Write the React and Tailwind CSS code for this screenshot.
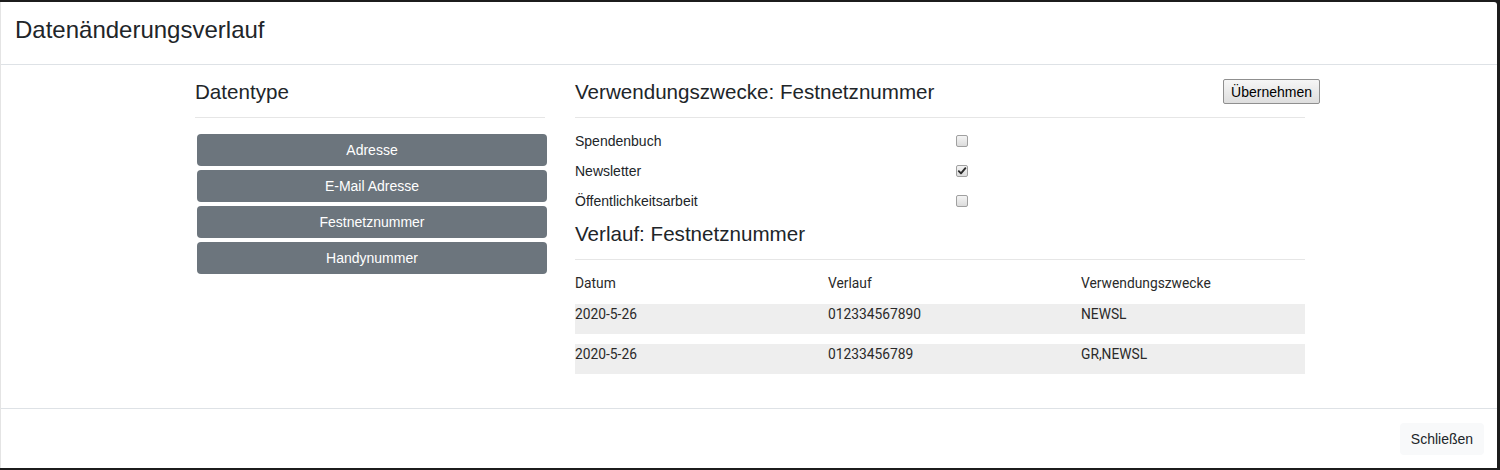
import React from 'react';

const types = ['Adresse', 'E-Mail Adresse', 'Festnetznummer', 'Handynummer'];

const purposes = [
    { label: 'Spendenbuch', checked: false },
    { label: 'Newsletter', checked: true },
    { label: 'Öffentlichkeitsarbeit', checked: false },
];

const history = [
    { date: '2020-5-26', value: '012334567890', purpose: 'NEWSL' },
    { date: '2020-5-26', value: '01233456789', purpose: 'GR,NEWSL' },
];

const Checkbox = ({ checked }) => (
    <span className="w-[12px] h-[12px] rounded-[2px] border border-[#a0a0a0] bg-gradient-to-b from-[#f4f4f4] to-[#dcdcdc] flex items-center justify-center">
        {checked && (
            <svg width="10" height="10" viewBox="0 0 10 10">
                <path d="M1.8 5.2 L4 7.4 L8.4 2.2" fill="none" stroke="#2b2b2b" strokeWidth="1.9" strokeLinecap="round" strokeLinejoin="round" />
            </svg>
        )}
    </span>
);

const App = () => {
    return (
        <div className="h-[470px] w-[1500px] bg-[#1c1c1c] pt-[2px] overflow-hidden font-['Liberation_Sans',Arial,sans-serif] text-[#212529]">
            <div className="w-[1497px] h-[466px] bg-white border-l border-[#e4e4e4] rounded-tr-[3px] flex flex-col">
                {/* Header */}
                <div className="h-[63px] border-b border-[#dee2e6] px-[14px] flex items-center">
                    <h5 className="text-[24px] leading-[28px] -mt-[6px]">Datenänderungsverlauf</h5>
                </div>

                {/* Body */}
                <div className="flex-1 pt-[15px]">
                    <div className="w-[1110px] ml-[194px] flex gap-[30px]">
                        <div className="w-[350px] shrink-0">
                            <h4 className="text-[20.6px] leading-[24px]">Datentype</h4>
                            <hr className="mt-[13px] border-t border-[#e6e6e6]" />
                            <div className="mt-[16px] ml-[2px] flex flex-col gap-[4px]">
                                {types.map((t) => (
                                    <button
                                        key={t}
                                        className="h-[32px] w-[350px] rounded-[4px] bg-[#6c757d] text-white text-[14px] leading-[20px] pb-[1px]"
                                    >
                                        {t}
                                    </button>
                                ))}
                            </div>
                        </div>

                        <div className="w-[730px] shrink-0">
                            <div className="flex items-start justify-between">
                                <h4 className="text-[20.6px] leading-[24px]">Verwendungszwecke: Festnetznummer</h4>
                                <button className="h-[25px] px-[7px] -mr-[15px] -mt-[1px] text-[14px] leading-[20px] text-black rounded-[2px] border border-[#8f8f8f] bg-gradient-to-b from-[#f6f6f6] to-[#dedede]">
                                    Übernehmen
                                </button>
                            </div>
                            <hr className="mt-[13px] border-t border-[#e6e6e6]" />
                            <div className="mt-[13px] flex flex-col gap-[10px]">
                                {purposes.map((p) => (
                                    <div key={p.label} className="flex items-center h-[20px] text-[14px]">
                                        <span className="w-[381px]">{p.label}</span>
                                        <Checkbox checked={p.checked} />
                                    </div>
                                ))}
                            </div>
                            <h4 className="mt-[11px] text-[20.6px] leading-[24px]">Verlauf: Festnetznummer</h4>
                            <hr className="mt-[13px] border-t border-[#e6e6e6]" />
                            <div className="mt-[13px] font-['Roboto',Arial,sans-serif] text-[13.8px] leading-[20px] text-[#2a2a2a]">
                                <div className="grid grid-cols-[253px_253px_1fr] h-[20px]">
                                    <span>Datum</span>
                                    <span>Verlauf</span>
                                    <span>Verwendungszwecke</span>
                                </div>
                                <div className="mt-[11px] flex flex-col gap-[10px]">
                                    {history.map((h, i) => (
                                        <div key={i} className="grid grid-cols-[253px_253px_1fr] h-[30px] bg-[#eeeeee]">
                                            <span>{h.date}</span>
                                            <span>{h.value}</span>
                                            <span>{h.purpose}</span>
                                        </div>
                                    ))}
                                </div>
                            </div>
                        </div>
                    </div>
                </div>

                {/* Footer */}
                <div className="h-[60px] border-t border-[#dee2e6] flex items-start justify-end pt-[14px] pr-[13px]">
                    <button className="h-[32px] w-[84px] rounded-[4px] bg-[#f8f9fa] text-[14px] leading-[20px] text-[#212529]">
                        Schließen
                    </button>
                </div>
            </div>
        </div>
    );
};

export default App;
